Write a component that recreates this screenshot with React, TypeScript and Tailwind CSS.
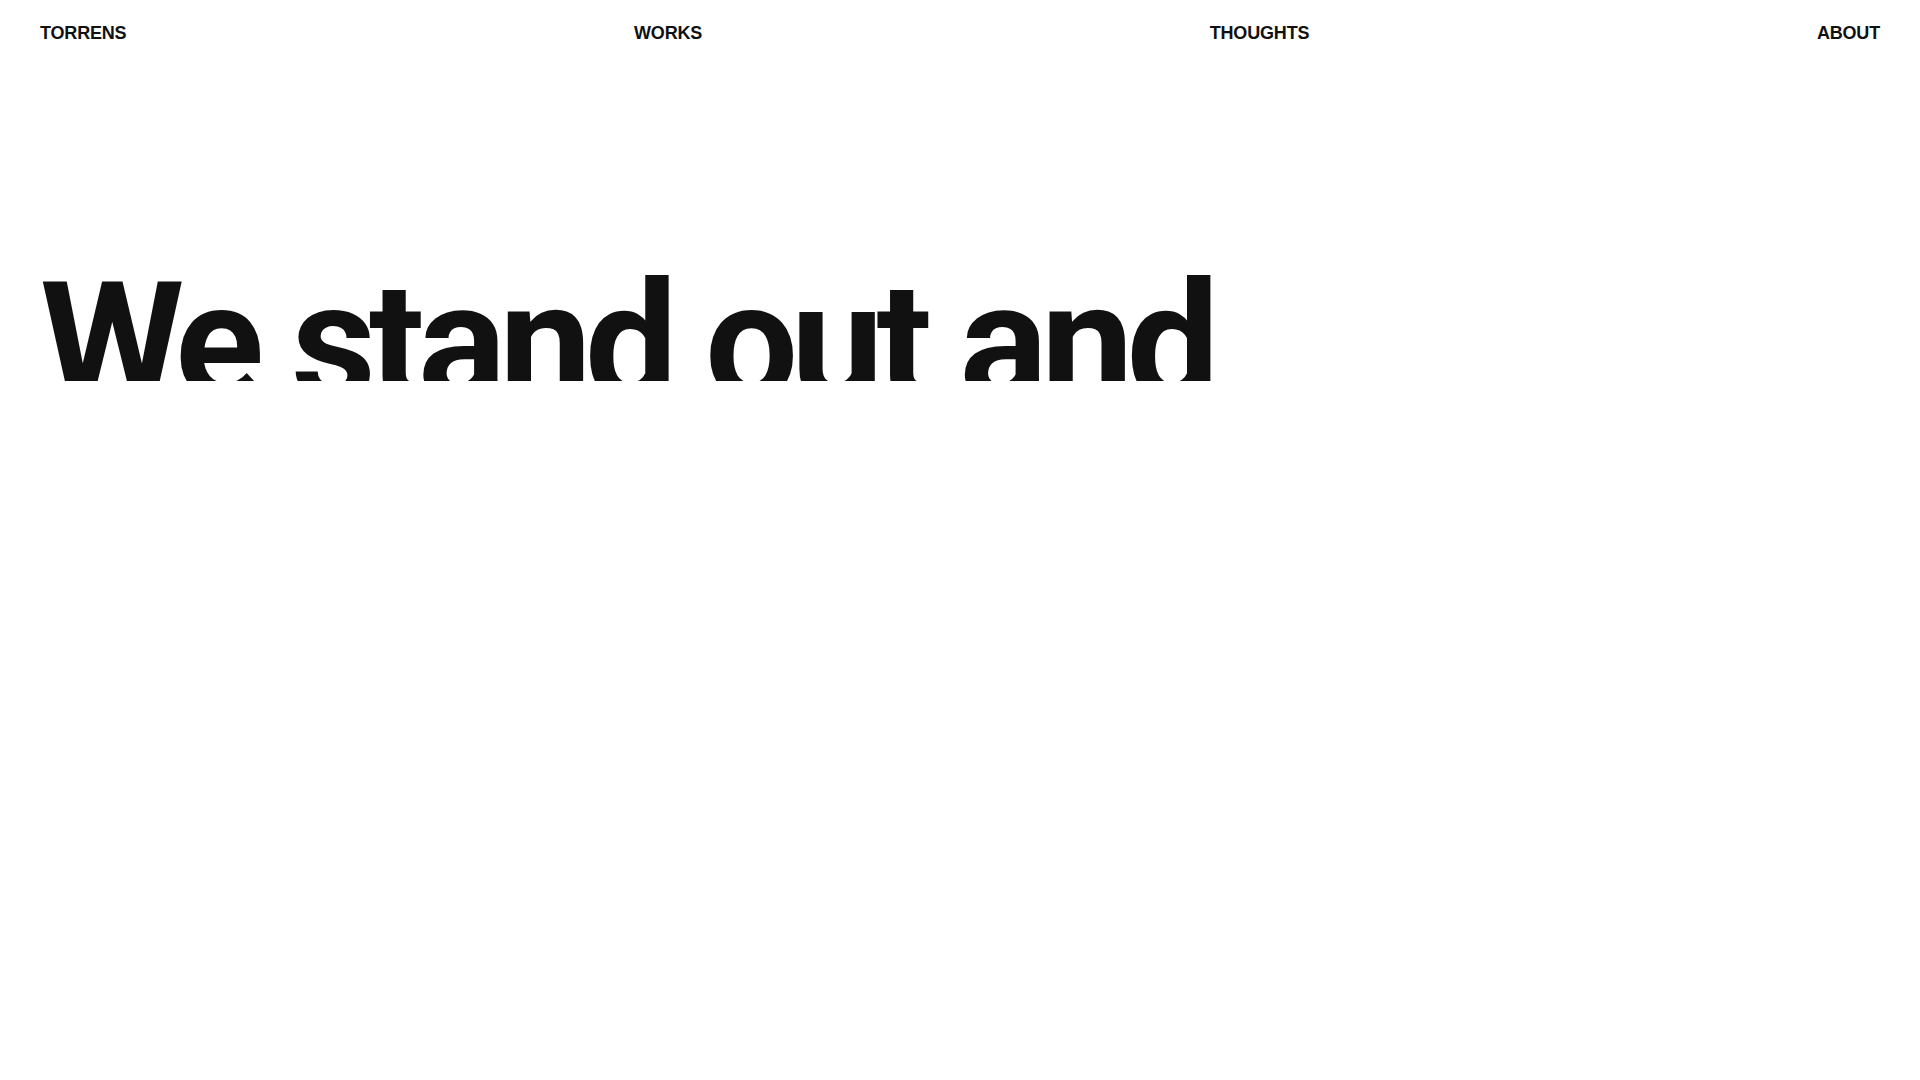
import React from "react";

const links = ["TORRENS", "WORKS", "THOUGHTS", "ABOUT"];

export default function App() {
  return (
    <div className="min-h-screen w-full bg-white text-[#111111] [font-family:'Liberation_Sans',Arial,sans-serif]">
      <header className="flex items-center justify-between px-10 pt-[21px]">
        {links.map((l) => (
          <a
            key={l}
            href="#"
            className="text-[18px] leading-6 font-bold tracking-[-0.01em] text-[#111111]"
          >
            {l}
          </a>
        ))}
      </header>
      <main className="px-10 pt-[215px]">
        <h1 className="h-[121px] overflow-hidden">
          <span className="block whitespace-nowrap text-[165px] leading-none font-bold tracking-[-0.042em] [font-family:Roboto,'Liberation_Sans',Arial,sans-serif]">
            We stand out and
          </span>
        </h1>
      </main>
    </div>
  );
}
